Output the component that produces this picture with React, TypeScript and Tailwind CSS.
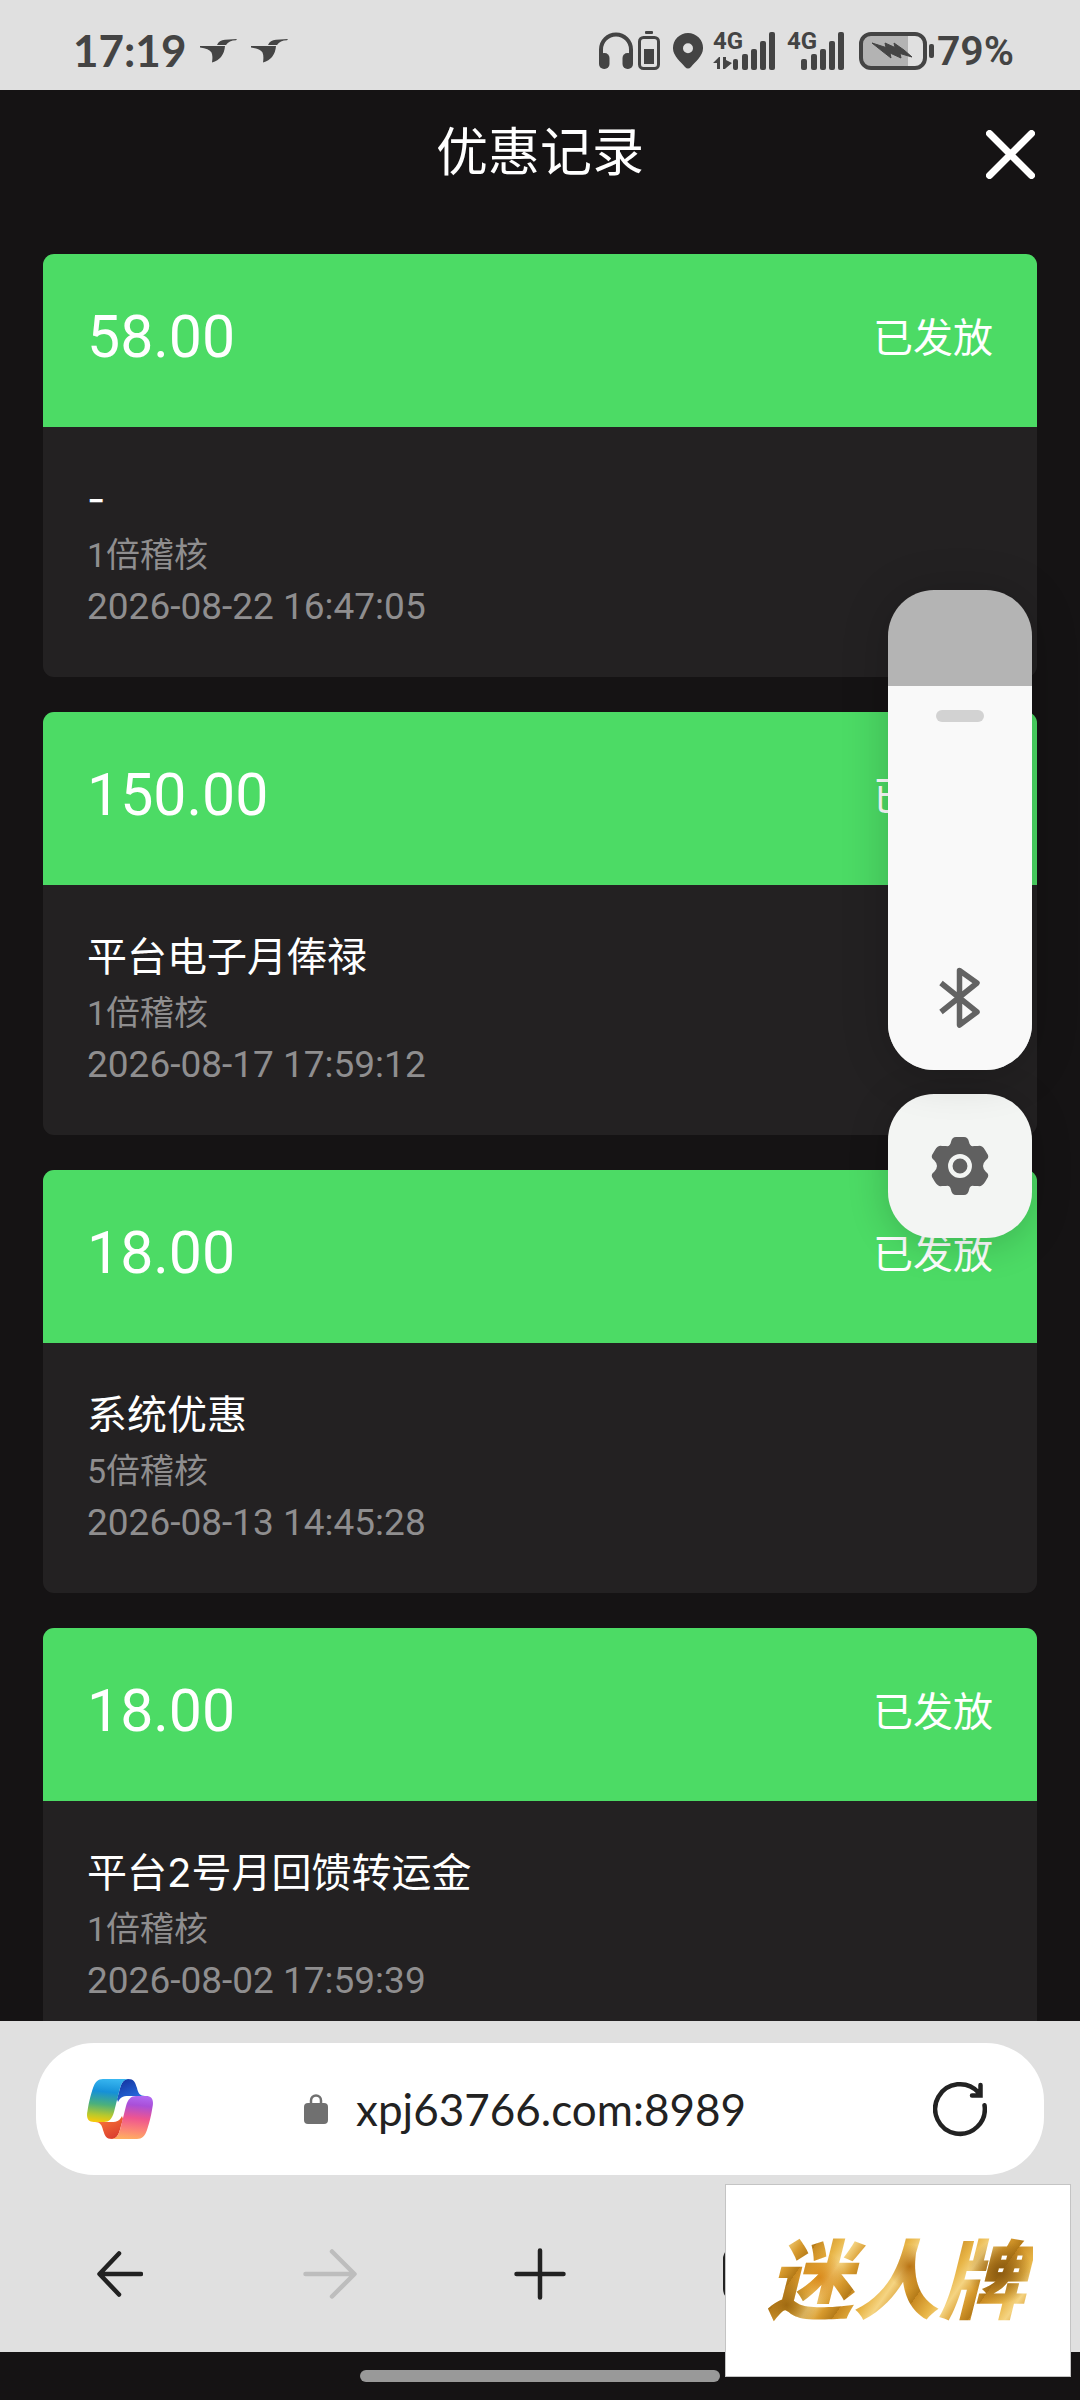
import { useState } from 'react';

type Bonus = { amount: string; status: string; title: string; audit: string; time: string };

const records: Bonus[] = [
  { amount: '58.00', status: '已发放', title: '-', audit: '1倍稽核', time: '2026-08-22 16:47:05' },
  { amount: '150.00', status: '已发放', title: '平台电子月俸禄', audit: '1倍稽核', time: '2026-08-17 17:59:12' },
  { amount: '18.00', status: '已发放', title: '系统优惠', audit: '5倍稽核', time: '2026-08-13 14:45:28' },
  { amount: '18.00', status: '已发放', title: '平台2号月回馈转运金', audit: '1倍稽核', time: '2026-08-02 17:59:39' },
];

function BirdIcon() {
  return (
    <svg className="h-6 w-[37px]" viewBox="0 0 37 24" fill="currentColor" aria-hidden="true">
      <path d="M0 7H25Q24 20 12 23.500Q13 17 11.500 13.500Q9 9.500 0 8.500Z" />
      <path d="M17 6Q19 1 25 .8L37 0L36 1.300Q29 1.500 26 6Z" />
    </svg>
  );
}

function HeadphonesIcon() {
  return (
    <svg className="h-[38px] w-9" viewBox="0 0 36 38" aria-hidden="true">
      <path d="M3 28V17.500a15 15 0 0 1 30 0V28" fill="none" stroke="currentColor" strokeWidth="4" />
      <rect x="1" y="21" width="10.500" height="16" rx="5" fill="currentColor" />
      <rect x="24.500" y="21" width="10.500" height="16" rx="5" fill="currentColor" />
    </svg>
  );
}

function EarbudBatteryIcon() {
  return (
    <svg className="h-10 w-[22px]" viewBox="0 0 22 40" aria-hidden="true">
      <rect x="7" y="0" width="8" height="3" rx="1" fill="currentColor" />
      <rect x="1.500" y="6.500" width="19" height="31" rx="4" fill="none" stroke="currentColor" strokeWidth="3" />
      <rect x="6" y="18" width="10" height="15" fill="currentColor" />
    </svg>
  );
}

function PinIcon() {
  return (
    <svg className="h-9 w-[30px]" viewBox="0 0 30 36" aria-hidden="true">
      <path
        fill="currentColor"
        fillRule="evenodd"
        d="M15 0a15 15 0 0 1 15 15.500C30 23 22 29 18 34Q15 37 12 34C8 29 0 23 0 15.500A15 15 0 0 1 15 0ZM15 10.300a5 5 0 1 0 0 10 5 5 0 0 0 0-10Z"
      />
    </svg>
  );
}

function Signal({ data }: { data?: boolean }) {
  return (
    <div className="relative h-[38px] w-[62px]">
      <span className="absolute left-0 top-0 text-[24px] font-bold leading-[19px]">4G</span>
      <svg className="h-[38px] w-[62px]" viewBox="0 0 62 38" fill="currentColor" aria-hidden="true">
        {data && (
          <>
            <path d="M0 31L6 25H7V37H4V31Z" />
            <path d="M10 25H13V28L19 31L13 36L12 37H10Z" />
          </>
        )}
        {data ? <rect x="20" y="27" width="5" height="11" rx="2" /> : <rect x="14" y="27" width="6" height="11" rx="2" />}
        {[
          [29, 22],
          [38, 17],
          [47, 9],
          [56, 0],
        ].map(([x, y]) => (
          <rect key={x} x={data ? x : x - 5} y={y} width="6" height={38 - y} rx="2" />
        ))}
      </svg>
    </div>
  );
}

function BatteryIcon() {
  return (
    <svg className="h-[38px] w-[76px]" viewBox="0 0 76 38" aria-hidden="true">
      <path d="M12 3H49V35H12Q4 35 4 26V12Q4 3 12 3Z" fill="#b3b3b3" />
      <rect x="2" y="2" width="64" height="34" rx="10" fill="none" stroke="currentColor" strokeWidth="4" />
      <rect x="70" y="12" width="5" height="14" rx="2" fill="currentColor" />
      <path
        d="M13 11L27 15.500L26 11L36 15.500L35 11L45 18L53 25L41 21.500L42 26L31 21L32 26L23 19Z"
        fill="currentColor"
        stroke="currentColor"
        strokeWidth="1"
        strokeLinejoin="round"
      />
    </svg>
  );
}

function CopilotLogo() {
  const ribbon = 'M16 0H42C36 0 34 5 32 13L27 33C25 40 22 43 17 43H7C1 43-1 39 .5 32C2 22 4 15 6 9C8 3 11 0 16 0Z';
  const fold = 'M41 0C47 0 48 3 50 9C51 14 53 17 58 17H44C37 17 34 17 31 23L30 20L32 13C34 5 36 0 41 0Z';
  return (
    <svg className="h-[60px] w-[66px]" viewBox="0 0 66 60" aria-hidden="true">
      <defs>
        <linearGradient id="sea" x1="0.5" y1="0" x2="0.4" y2="1">
          <stop offset="0" stopColor="#38b6f0" />
          <stop offset="0.3" stopColor="#1590d8" />
          <stop offset="0.6" stopColor="#4bb07c" />
          <stop offset="0.85" stopColor="#b9c92c" />
          <stop offset="1" stopColor="#f5c90c" />
        </linearGradient>
        <linearGradient id="navy" x1="0.2" y1="0" x2="0.8" y2="1">
          <stop offset="0" stopColor="#1434a0" />
          <stop offset="1" stopColor="#2a76ea" />
        </linearGradient>
        <linearGradient id="sunset" x1="0.5" y1="1" x2="0.6" y2="0">
          <stop offset="0" stopColor="#b067f0" />
          <stop offset="0.2" stopColor="#a94fd8" />
          <stop offset="0.5" stopColor="#ee5590" />
          <stop offset="0.75" stopColor="#fb7f79" />
          <stop offset="1" stopColor="#ffae62" />
        </linearGradient>
        <linearGradient id="ember" x1="0.2" y1="0" x2="0.8" y2="1">
          <stop offset="0" stopColor="#d83a2e" />
          <stop offset="1" stopColor="#fb7838" />
        </linearGradient>
      </defs>
      <path d={fold} fill="url(#navy)" />
      <path d={ribbon} fill="url(#sea)" />
      <g transform="rotate(180 33 30)">
        <path d={fold} fill="url(#ember)" />
        <path d={ribbon} fill="url(#sunset)" />
      </g>
    </svg>
  );
}

function StatusBar() {
  return (
    <div className="flex h-[90px] shrink-0 items-center justify-between bg-[#e0e0e0] pl-[73px] pr-[66px] pt-3 text-[#444]">
      <div className="flex items-center">
        <span className="pb-[2px] font-['Lato',sans-serif] text-[44px] font-bold leading-none">17:19</span>
        <span className="ml-[14px] flex gap-[14px]">
          <BirdIcon />
          <BirdIcon />
        </span>
      </div>
      <div className="flex items-center">
        <HeadphonesIcon />
        <span className="ml-1">
          <EarbudBatteryIcon />
        </span>
        <span className="ml-[13px]">
          <PinIcon />
        </span>
        <span className="ml-[10px]">
          <Signal data />
        </span>
        <span className="ml-3">
          <Signal />
        </span>
        <span className="ml-[10px]">
          <BatteryIcon />
        </span>
        <span className="ml-[2px] text-[41px] font-semibold leading-none">79%</span>
      </div>
    </div>
  );
}

function BonusCard({ record }: { record: Bonus }) {
  return (
    <li className="overflow-hidden rounded-[11px] bg-[#232122]">
      <div className="flex h-[173px] items-center justify-between bg-[#4cdb65] px-11 pb-2 text-white">
        <span className="text-[59px] leading-[64px]">{record.amount}</span>
        <span className="pt-1 text-[40px] leading-[48px]">{record.status}</span>
      </div>
      <div className="px-11 pb-[45px] pt-[42px] text-[#8f8e8f]">
        <h2 className="font-['Inter','Noto_Sans_CJK_SC',sans-serif] text-[40px] leading-[60px] text-white">{record.title}</h2>
        <p className="text-[34px] leading-[52px]">{record.audit}</p>
        <p className="text-[37px] leading-[51px]">{record.time}</p>
      </div>
    </li>
  );
}

function VolumePanel() {
  const [volume, setVolume] = useState(80);
  return (
    <aside className="absolute right-12 top-[590px] flex w-36 flex-col gap-6">
      <div className="relative flex h-[480px] flex-col justify-end overflow-hidden rounded-[46px] bg-[#b4b4b4] shadow-[0_4px_48px_rgba(0,0,0,0.2)]">
        <div className="flex flex-col items-center justify-between bg-[#f9f9f9] pb-[41px] pt-6" style={{ height: `${volume}%` }}>
          <span className="h-3 w-12 rounded-full bg-[#d2d2d2]" />
          <svg className="h-[62px] w-[42px]" viewBox="0 0 42 62" fill="none" stroke="#636363" strokeWidth="5.500" strokeLinejoin="round" aria-hidden="true">
            <path d="M2 16L38 45L20.500 58V3.500L38 16L2 45" />
          </svg>
        </div>
        <input
          type="range"
          aria-label="音量"
          min={10}
          max={100}
          value={volume}
          onChange={(e) => setVolume(Number(e.target.value))}
          className="absolute inset-0 h-full w-full opacity-0 [direction:rtl] [writing-mode:vertical-lr]"
        />
      </div>
      <button type="button" aria-label="声音设置" className="flex h-36 items-center justify-center rounded-[46px] bg-[#f3f5f3] shadow-[0_4px_40px_rgba(0,0,0,0.2)]">
        <svg className="h-[60px] w-[58px]" viewBox="0 0 58 60" aria-hidden="true">
          <path
            fill="#606060"
            d="M25 1H33Q37 1 38 6Q39 11 43 10L47 10Q51 9 54 14L57 19Q58 22 55 24Q52 27 52 30Q52 33 55 36Q58 38 57 41L54 46Q51 51 47 50L43 50Q39 49 38 54Q37 59 33 59H25Q21 59 20 54Q19 49 15 50L11 50Q7 51 4 46L1 41Q0 38 3 36Q6 33 6 30Q6 27 3 24Q0 22 1 19L4 14Q7 9 11 10L15 10Q19 11 20 6Q21 1 25 1Z"
          />
          <circle cx="29" cy="30" r="9.700" fill="none" stroke="#f3f5f3" strokeWidth="4.500" />
        </svg>
      </button>
    </aside>
  );
}

function BrowserBar() {
  return (
    <footer className="shrink-0 bg-[#e0e0e0] text-[#222]">
      <div className="px-9 pt-[22px]">
        <div className="flex h-[132px] items-center rounded-[58px] bg-white pl-[51px] pr-[57px]">
          <button type="button" aria-label="Copilot">
            <CopilotLogo />
          </button>
          <div className="flex flex-1 items-center justify-center pr-9">
            <svg className="mr-7 h-[30px] w-6 shrink-0" viewBox="0 0 24 30" aria-hidden="true">
              <path d="M7 12V6.500a5 5 0 0 1 10 0V12" fill="none" stroke="#707070" strokeWidth="2.500" />
              <rect y="9" width="24" height="21" rx="4" fill="#707070" />
            </svg>
            <input
              aria-label="网址"
              defaultValue="xpj63766.com:8989"
              className="field-sizing-content bg-transparent font-['Lato',sans-serif] text-[44px] leading-[56px] outline-none"
            />
          </div>
          <button type="button" aria-label="刷新">
            <svg className="h-14 w-[54px]" viewBox="0 0 54 56" fill="none" stroke="currentColor" strokeWidth="4.500" strokeLinecap="round" aria-hidden="true">
              <path d="M51.500 24.200A24.800 24.800 0 1 1 45.500 11.500M47.500 4V14.500H39" />
            </svg>
          </button>
        </div>
      </div>
      <nav className="grid h-[177px] grid-cols-5 items-center px-[15px] pt-5">
        <button type="button" aria-label="后退" className="flex justify-center">
          <svg className="h-[46px] w-[46px]" viewBox="0 0 46 46" fill="none" stroke="currentColor" strokeWidth="4.500" strokeLinecap="round" strokeLinejoin="round" aria-hidden="true">
            <path d="M44 23H3M22 2.500L2.500 23L22 43.500" />
          </svg>
        </button>
        <button type="button" aria-label="前进" disabled className="flex justify-center text-[#bdbdbd]">
          <svg className="h-[50px] w-[54px]" viewBox="0 0 54 50" fill="none" stroke="currentColor" strokeWidth="4.500" strokeLinecap="round" strokeLinejoin="round" aria-hidden="true">
            <path d="M2.500 25H51M29 2.500L51.500 25L29 47.500" />
          </svg>
        </button>
        <button type="button" aria-label="新建标签页" className="flex justify-center">
          <svg className="h-[52px] w-[52px]" viewBox="0 0 52 52" fill="none" stroke="currentColor" strokeWidth="4.500" strokeLinecap="round" aria-hidden="true">
            <path d="M2.500 26H49.500M26 2.500V49.500" />
          </svg>
        </button>
        <button type="button" aria-label="标签页" className="flex justify-center">
          <span className="size-[54px] rounded-xl border-4 border-current" />
        </button>
        <button type="button" aria-label="菜单" className="flex justify-center">
          <svg className="h-[52px] w-[52px]" viewBox="0 0 52 52" stroke="currentColor" strokeWidth="4.500" strokeLinecap="round" aria-hidden="true">
            <path d="M4 12H48M4 26H48M4 40H48" />
          </svg>
        </button>
      </nav>
      <div className="flex h-12 justify-center bg-[#151314] pt-[18px]">
        <span className="h-3 w-1/3 rounded-full bg-[#999]" />
      </div>
    </footer>
  );
}

export default function App() {
  return (
    <div className="relative flex h-screen flex-col overflow-hidden bg-[#151314] font-['Roboto','Noto_Sans_CJK_SC',sans-serif]">
      <StatusBar />
      <header className="relative flex h-32 shrink-0 items-center justify-center text-white">
        <h1 className="text-[52px] leading-[72px]">优惠记录</h1>
        <button type="button" aria-label="关闭" className="absolute right-[45px] top-10">
          <svg className="size-[49px]" viewBox="0 0 49 49" stroke="currentColor" strokeWidth="7" strokeLinecap="round" aria-hidden="true">
            <path d="M3.500 3.500L45.500 45.500M45.500 3.500L3.500 45.500" />
          </svg>
        </button>
      </header>
      <main className="min-h-0 flex-1 overflow-y-auto px-[43px] pt-9 [scrollbar-width:none]">
        <ul className="flex flex-col gap-[35px]">
          {records.map((record) => (
            <BonusCard key={record.time} record={record} />
          ))}
        </ul>
      </main>
      <BrowserBar />
      <VolumePanel />
      <div className="absolute bottom-[23px] right-[9px] flex h-[193px] w-[346px] items-center justify-center border border-[#c4c4c4] bg-white pr-1 pt-1">
        <span className="bg-[radial-gradient(circle_at_22%_45%,#d98a1c_0px,transparent_26px),radial-gradient(circle_at_55%_35%,#b97414_0px,transparent_22px),radial-gradient(circle_at_88%_40%,#8a5a10_0px,transparent_32px),radial-gradient(circle_at_10%_70%,#a06a12_0px,transparent_30px),repeating-linear-gradient(125deg,#c98a22_0px,#e8b547_18px,#f5d482_30px,#d79a2e_44px,#b47a18_56px)] bg-clip-text px-2 text-[86px] font-black italic leading-[110px] text-transparent">
          迷人牌
        </span>
      </div>
    </div>
  );
}
